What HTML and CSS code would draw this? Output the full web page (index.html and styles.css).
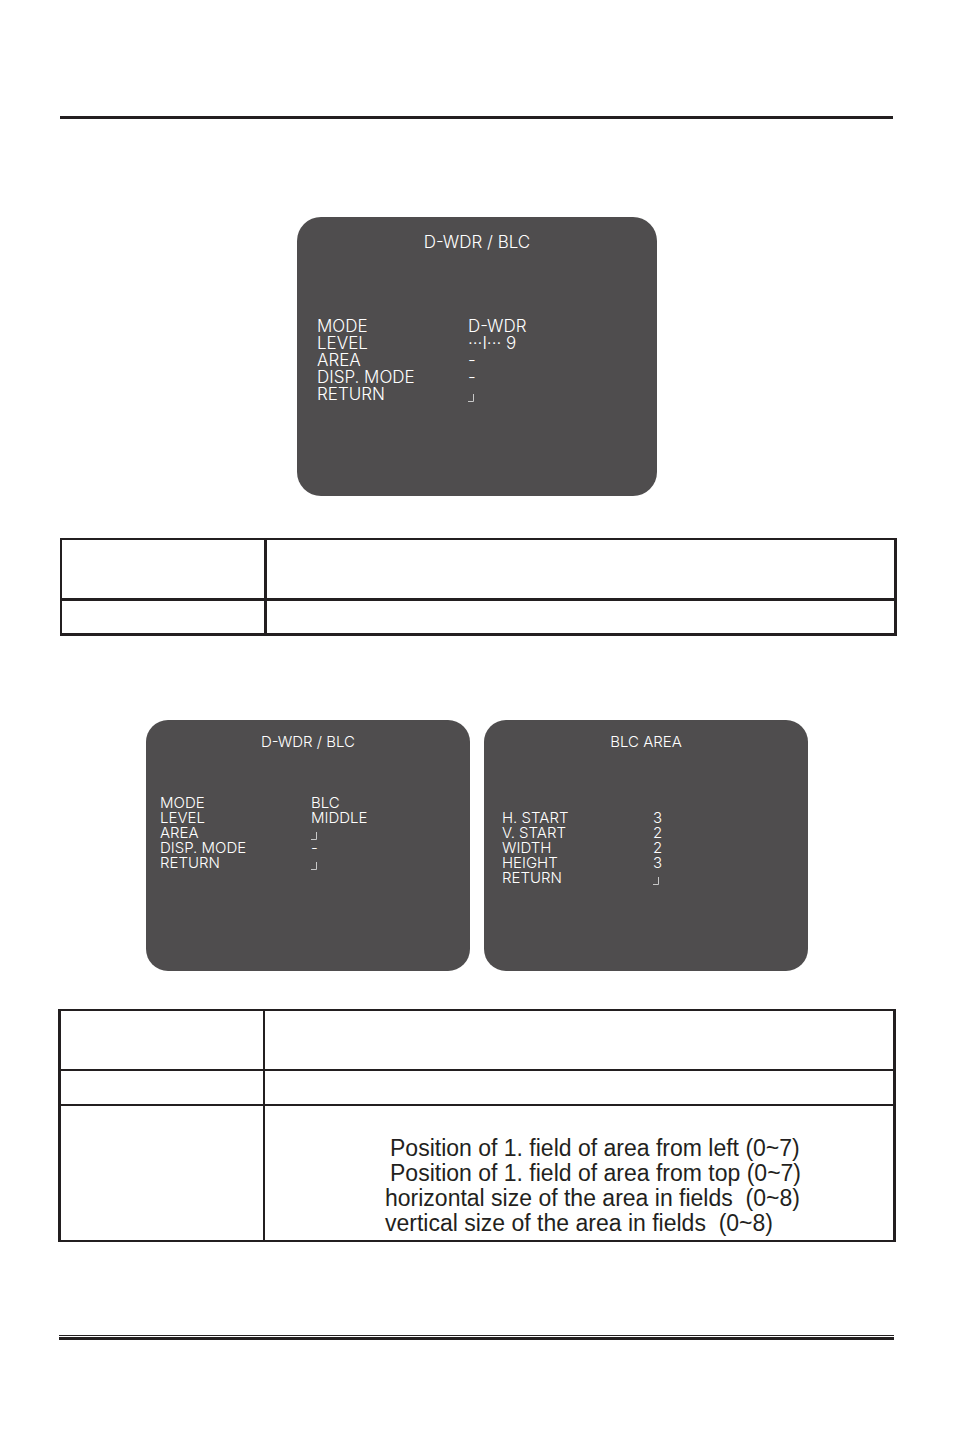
FILE: index.html
```
<!DOCTYPE html>
<html lang="en">
<head>
    <meta charset="UTF-8">
    <meta name="viewport" content="width=device-width, initial-scale=1.0">
    <title>D-WDR / BLC</title>
    <link rel="stylesheet" href="styles.css">
</head>
<body>
    <div class="page">
        <hr class="top-rule">

        <div class="screens">
            <section class="screen large">
                <h2>D-WDR / BLC</h2>
                <dl>
                    <dt>MODE</dt><dd>D-WDR</dd>
                    <dt>LEVEL</dt><dd>···I··· 9</dd>
                    <dt>AREA</dt><dd>-</dd>
                    <dt>DISP. MODE</dt><dd>-</dd>
                    <dt>RETURN</dt><dd><svg class="enter" viewBox="0 0 6 8"><path d="M0 7.5H5.5V0"/></svg></dd>
                </dl>
            </section>
        </div>

        <div class="table-wrap first">
            <table class="heavy">
                <tr class="tall"><td></td><td></td></tr>
                <tr class="short"><td></td><td></td></tr>
            </table>
        </div>

        <div class="screens pair">
            <section class="screen">
                <h2>D-WDR / BLC</h2>
                <dl>
                    <dt>MODE</dt><dd>BLC</dd>
                    <dt>LEVEL</dt><dd>MIDDLE</dd>
                    <dt>AREA</dt><dd><svg class="enter" viewBox="0 0 6 8"><path d="M0 7.5H5.5V0"/></svg></dd>
                    <dt>DISP. MODE</dt><dd>-</dd>
                    <dt>RETURN</dt><dd><svg class="enter" viewBox="0 0 6 8"><path d="M0 7.5H5.5V0"/></svg></dd>
                </dl>
            </section>
            <section class="screen area">
                <h2>BLC AREA</h2>
                <dl>
                    <dt>H. START</dt><dd>3</dd>
                    <dt>V. START</dt><dd>2</dd>
                    <dt>WIDTH</dt><dd>2</dd>
                    <dt>HEIGHT</dt><dd>3</dd>
                    <dt>RETURN</dt><dd><svg class="enter" viewBox="0 0 6 8"><path d="M0 7.5H5.5V0"/></svg></dd>
                </dl>
            </section>
        </div>

        <div class="table-wrap">
            <table class="light">
                <tr class="tall"><td></td><td></td></tr>
                <tr class="short"><td></td><td></td></tr>
                <tr>
                    <td></td>
                    <td class="fields">
                        <p class="position">Position of 1. field of area from left (0~7)</p>
                        <p class="position">Position of 1. field of area from top (0~7)</p>
                        <p>horizontal size of the area in fields&nbsp; (0~8)</p>
                        <p>vertical size of the area in fields&nbsp; (0~8)</p>
                    </td>
                </tr>
            </table>
        </div>

        <hr class="bottom-rule">
    </div>
</body>
</html>
```
FILE: styles.css
```
body {
    margin: 0;
    background-color: #fff;
    color: #231f20;
    font-family: "Liberation Sans", Arial, sans-serif;
}

.page {
    padding: 116px 58px 91px;
}

.top-rule {
    height: 3px;
    margin: 0 3px 98px 2px;
    border: none;
    background-color: #231f20;
}

/* camera menu screens */
.screens {
    display: flex;
    justify-content: center;
    gap: 14px;
}

.screen {
    box-sizing: border-box;
    width: 324px;
    min-height: 251px;
    padding: 14px;
    border-radius: 22px;
    background-color: #4f4d4e;
    color: #fff;
    font-family: Inter, "Liberation Sans", sans-serif;
    font-size: 15px;
    font-weight: 300;
    line-height: 15px;
}

.screen.large {
    width: 360px;
    min-height: 279px;
    padding: 17px 20px;
    border-radius: 24px;
    font-size: 17px;
    line-height: 17px;
}

.screen.area {
    padding-left: 18px;
    padding-right: 18px;
}

.screen h2 {
    margin: 0 0 46px;
    font-size: inherit;
    font-weight: inherit;
    text-align: center;
}

.screen.large h2 {
    margin-bottom: 67px;
}

.screen.area h2 {
    margin-bottom: 61px;
}

.screen dl {
    display: grid;
    grid-template-columns: 151px 1fr;
    margin: 0;
}

.screen dd {
    margin: 0;
}

.enter {
    width: 6px;
    height: 8px;
    vertical-align: -2px;
    fill: none;
    stroke: #c8c8c8;
}

/* description tables */
.table-wrap.first {
    margin: 42px -1px 84px 2px;
}

.pair + .table-wrap {
    margin-top: 38px;
}

table {
    width: 100%;
    border-collapse: separate;
    border-spacing: 0;
    table-layout: fixed;
    border: 0 solid #231f20;
}

td {
    padding: 0;
    border: 0 solid #231f20;
}

td:first-child {
    width: 202px;
}

.tall td {
    height: 58px;
}

.short td {
    height: 33px;
}

.heavy {
    border-width: 2px 3px 3px 2px;
}

.heavy .short td {
    height: 32px;
    border-top-width: 3px;
}

.heavy td + td {
    border-left-width: 3px;
}

.light {
    border-width: 2px 3px;
}

.light tr + tr td {
    border-top-width: 2px;
}

.light td + td {
    border-left-width: 2px;
}

.light .fields {
    padding: 30px 0 4px 120px;
}

.fields p {
    margin: 0;
    font-size: 23px;
    line-height: 25px;
}

.fields .position {
    padding-left: 5px;
}

.bottom-rule {
    height: 1px;
    margin: 93px 2px 0 1px;
    border: solid #231f20;
    border-width: 1px 0 3px;
}
```
